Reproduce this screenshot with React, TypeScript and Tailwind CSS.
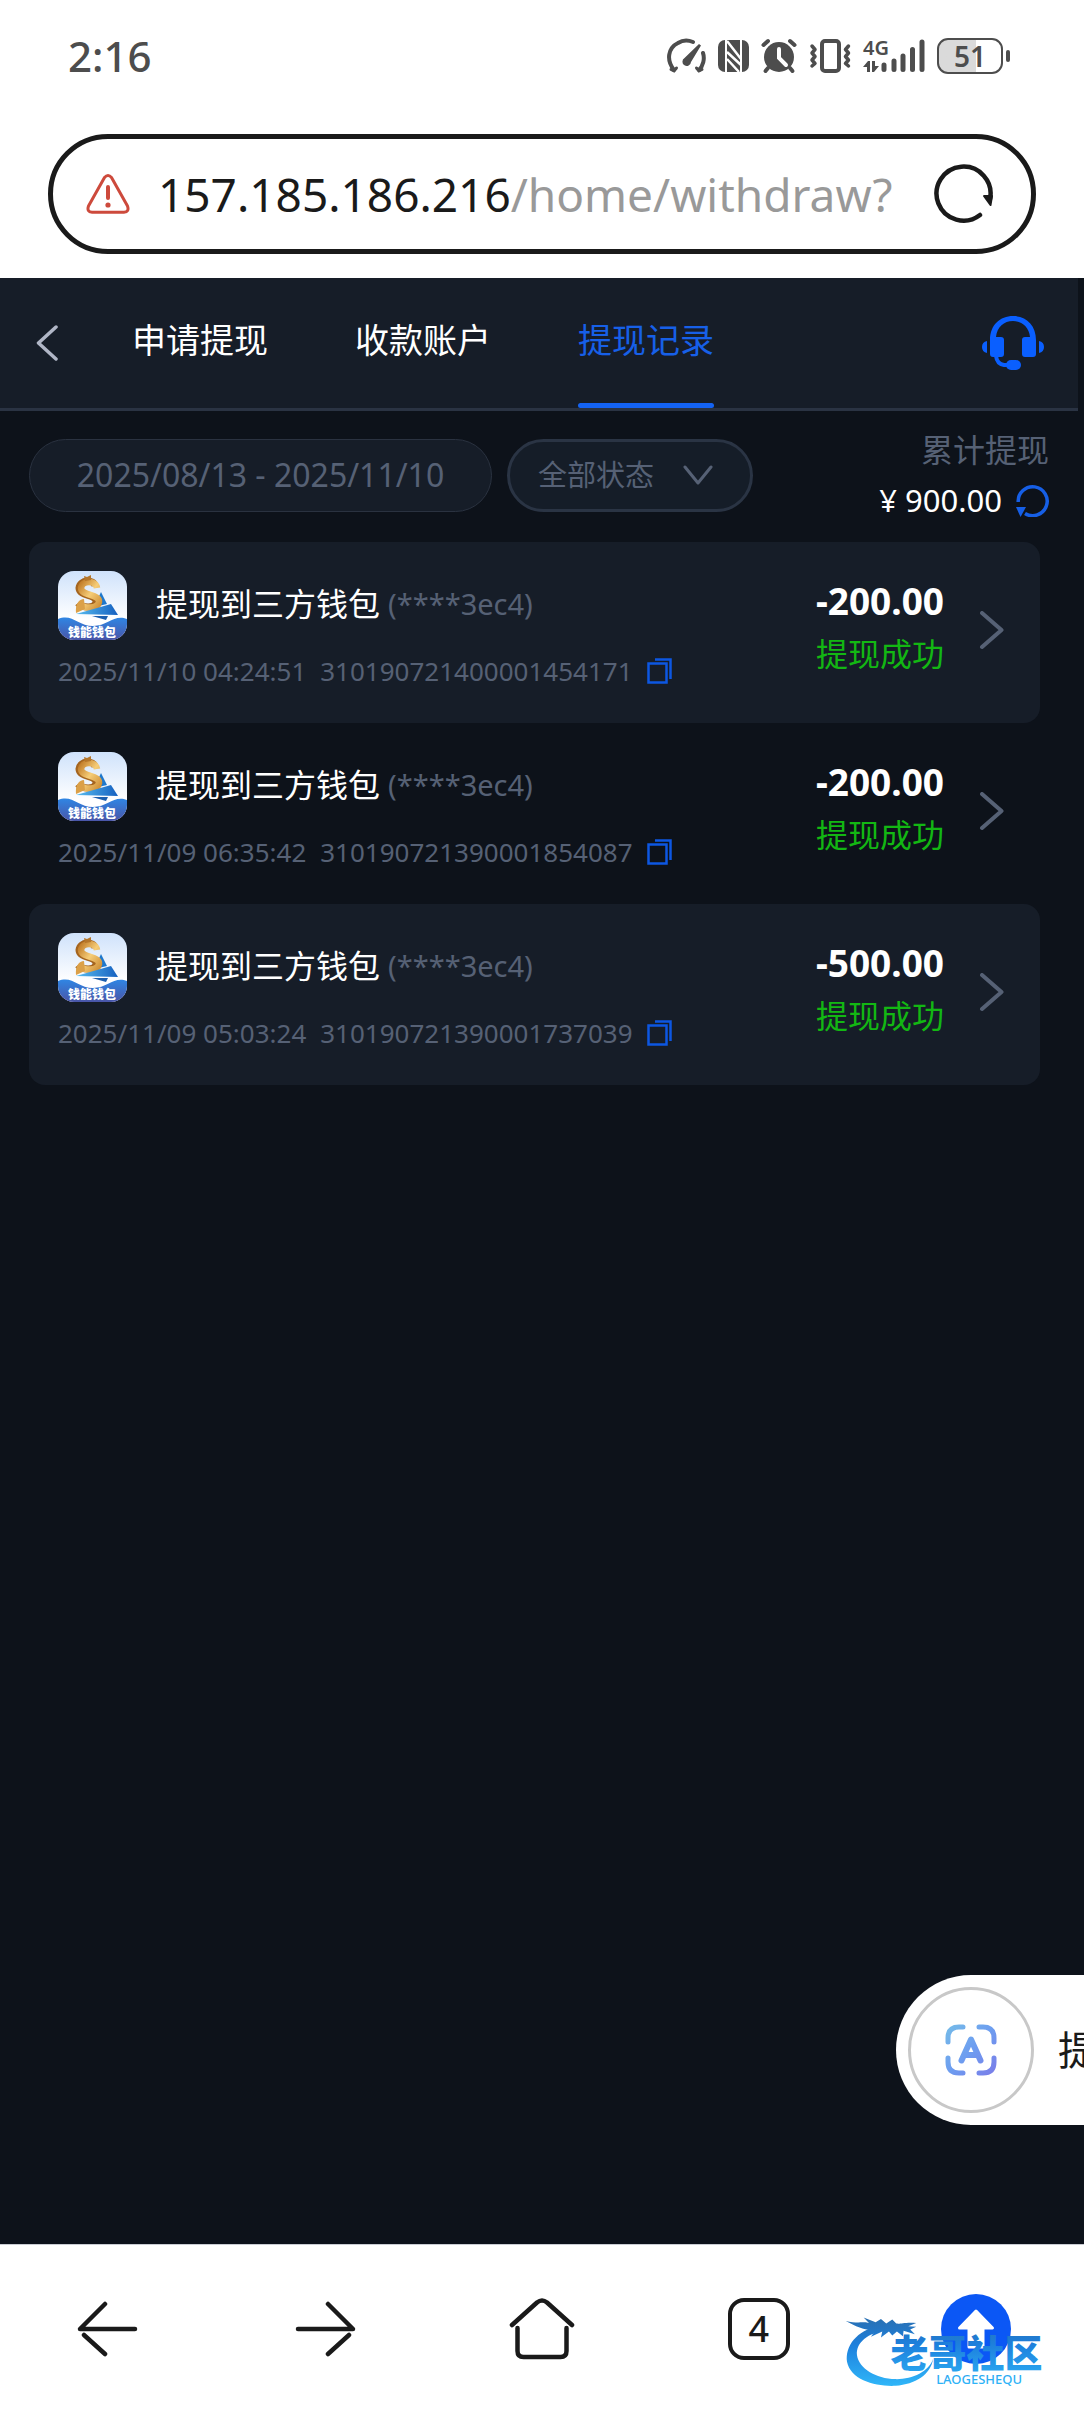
import { useState } from "react"

const RECORDS = [
  { id: "310190721400001454171", time: "2025/11/10 04:24:51", amount: "-200.00" },
  { id: "310190721390001854087", time: "2025/11/09 06:35:42", amount: "-200.00" },
  { id: "310190721390001737039", time: "2025/11/09 05:03:24", amount: "-500.00" },
]

const TABS = ["申请提现", "收款账户", "提现记录"]

function StatusBar() {
  return (
    <div className="flex h-28 items-center justify-between pr-[74px] pl-[68px] text-[#4d4d4d]">
      <span className="text-[42px] leading-none font-medium">2:16</span>
      <div className="flex items-center gap-3">
        {/* Speed */}
        <svg width="39" height="36" viewBox="0 0 39 36" fill="none" stroke="currentColor" strokeWidth="4" strokeLinecap="round">
          <path d="M7 32 C-1 22 1 10 11 5 C15 2.500 21 2 26 4" />
          <path d="M36 15 C38 21 36 28 32 32" />
          <path d="M4 31.500 L7 33 L9.500 30 M35 31.500 L32 33 L29.500 30" strokeWidth="3" />
          <path d="M32 6 L34 7.500 L24 24 A4.300 4.300 0 1 1 17.500 20 Z" fill="currentColor" stroke="none" />
        </svg>
        {/* NFC */}
        <svg width="31" height="36" viewBox="0 0 31 36">
          <rect x="0" y="2" width="31" height="32" rx="7" fill="currentColor" />
          <path d="M8 2 L8 34 M23 2 L23 34" stroke="#fff" strokeWidth="2" />
          <path d="M9 3 L23 21 M9 14 L23 27 M9 21 L21 34" stroke="#fff" strokeWidth="2.500" />
        </svg>
        {/* Alarm */}
        <svg width="36" height="36" viewBox="0 0 36 36" fill="none" stroke="currentColor" strokeWidth="4" strokeLinecap="round">
          <circle cx="18" cy="19" r="15" fill="currentColor" stroke="none" />
          <path d="M2.500 7 L7 3 M33.500 7 L29 3" />
          <path d="M7 30 L4.500 33 M29 30 L31.500 33" />
          <path d="M18 11 L18 20 L25 27" stroke="#fff" />
        </svg>
        {/* Vibrate */}
        <svg width="42" height="36" viewBox="0 0 42 36" fill="none" stroke="currentColor" strokeWidth="4" strokeLinejoin="round" strokeLinecap="round">
          <rect x="13" y="3" width="17" height="30" rx="3" />
          <path d="M3 8 L6 11.500 L3 15 L6 18.500 L3 22 L6 25.500 L3 28" strokeWidth="3.500" />
          <path d="M39.500 8 L36.500 11.500 L39.500 15 L36.500 18.500 L39.500 22 L36.500 25.500 L39.500 28" strokeWidth="3.500" />
        </svg>
        {/* Signal */}
        <svg className="overflow-visible" width="62" height="36" viewBox="0 0 62 36" fill="currentColor">
          <text x="0" y="17" fontSize="20" fontWeight="600">4G</text>
          <path d="M0 29 L5 23 L7 23 L7 34 L4 34 L4 29 Z M9 23 L12 23 L12 28 L16 28 L11 34 L9 34 Z" />
          <g stroke="currentColor" strokeWidth="5" strokeLinecap="round">
            <path d="M21 27 V31.500 M31 23 V31.500 M40 18 V31.500 M49.500 11.500 V31.500 M59 4 V31.500" />
          </g>
        </svg>
        {/* Battery */}
        <div className="flex items-center gap-[3px]">
          <div className="flex h-9 w-[66px] items-center justify-center rounded-[11px] border-2 border-current bg-linear-to-r from-[#dadada] from-60% to-white to-60% text-[28px] leading-none font-semibold">
            51
          </div>
          <div className="h-3 w-1 rounded-full bg-current" />
        </div>
      </div>
    </div>
  )
}

function AddressBar() {
  return (
    <div className="px-12 pt-[22px] pb-6">
      <div className="flex h-[120px] items-center gap-7 rounded-full border-5 border-[#1a1a1a] pr-9 pl-[33px]">
        <svg className="shrink-0" width="44" height="40" viewBox="0 0 44 40" fill="none" stroke="#cd4a3c" strokeWidth="3" strokeLinejoin="round">
          <path d="M18.500 3.500 Q22 -0.500 25.500 3.500 L41.500 32 Q43.500 38 38 38.200 L6 38.200 Q0.500 38 2.500 32 Z" />
          <path d="M22 13 V24" strokeWidth="4" strokeLinecap="round" />
          <circle cx="22" cy="31" r="2.600" fill="#cd4a3c" stroke="none" />
        </svg>
        <button className="min-w-0 flex-1 overflow-hidden text-left text-[46px] leading-[64px] whitespace-nowrap text-[#1a1a1a]">
          157.185.186.216<span className="text-[#999]">/home/withdraw?</span>
        </button>
        <button aria-label="刷新" className="shrink-0">
          <svg width="64" height="64" viewBox="0 0 64 64" fill="none" stroke="#1a1a1a" strokeWidth="4.500" strokeLinecap="round">
            <path d="M49 53 A27 27 0 1 1 59 37" />
            <path d="M53 34 L61 34 L59.500 43 Z" fill="#1a1a1a" strokeWidth="2" strokeLinejoin="round" />
          </svg>
        </button>
      </div>
    </div>
  )
}

function NavBar({ active, onChange }: { active: string; onChange: (tab: string) => void }) {
  return (
    <nav className="mr-1.5 flex h-[133px] items-stretch border-b-3 border-[#2a3343] bg-[#161d28] pr-[34px] pl-9">
      <button aria-label="返回" className="mr-[74px]">
        <svg width="22" height="38" viewBox="0 0 22 38" fill="none" stroke="#b0b6c6" strokeWidth="3.500" strokeLinecap="round" strokeLinejoin="round">
          <path d="M20 3 L2.500 19 L20 35" />
        </svg>
      </button>
      <div className="flex flex-1 gap-[87px] text-[34px]">
        {TABS.map(tab => (
          <button
            key={tab}
            onClick={() => onChange(tab)}
            className={
              tab === active
                ? "flex flex-col items-center justify-between text-[#1760e8]"
                : "flex flex-col items-center justify-between text-white"
            }
          >
            <span className="flex flex-1 items-center">{tab}</span>
            <span className={tab === active ? "h-[5px] w-full rounded-full bg-[#1463f3]" : "h-[5px]"} />
          </button>
        ))}
      </div>
      <button aria-label="客服">
        <svg width="62" height="54" viewBox="0 0 62 54" fill="#0a5fff">
          <path d="M8 24 C8 9 18 0 31 0 C44 0 54 9 54 24 L54 38 Q54 41 51 41 L43 41 Q40 41 40 38 L40 24 Q40 21 43 21 L48 21 C47 11 40 5 31 5 C22 5 15 11 14 21 L19 21 Q22 21 22 24 L22 38 Q22 41 19 41 L11 41 Q8 41 8 38 Z" />
          <path d="M5 25 V37 Q0 36 0 31 Q0 26 5 25 Z M57 25 V37 Q62 36 62 31 Q62 26 57 25 Z" />
          <path d="M14 40 Q15 48 22 49 H27" fill="none" stroke="#0a5fff" strokeWidth="4" />
          <rect x="24" y="44" width="15" height="10" rx="5" />
        </svg>
      </button>
    </nav>
  )
}

function Filters() {
  return (
    <div className="mr-1.5 flex items-center justify-between px-[29px] pt-[14px]">
      <div className="flex gap-[15px]">
        <button className="h-[73px] w-[463px] rounded-full border border-[#2a3240] bg-[#161d28] text-[32px] text-[#566175]">
          2025/08/13 - 2025/11/10
        </button>
        <div className="relative">
          <select
            aria-label="状态"
            className="h-[73px] w-[246px] appearance-none rounded-full border-3 border-[#2a3444] bg-[#151d28] pl-7 text-[29px] text-[#566175] outline-none"
          >
            <option>全部状态</option>
          </select>
          <svg className="pointer-events-none absolute top-6 right-10" width="30" height="26" viewBox="0 0 30 26" fill="none" stroke="#566175" strokeWidth="3" strokeLinecap="round" strokeLinejoin="round">
            <path d="M2 4 L15 20 L28 4" />
          </svg>
        </div>
      </div>
      <div className="flex flex-col items-end leading-[50px]">
        <span className="text-[32px] text-[#566175]">累计提现</span>
        <div className="flex items-center text-[31px] text-white">
          <span className="mr-2">¥</span>
          <span className="mr-[14px]">900.00</span>
          <button aria-label="更新总额">
            <svg width="33" height="33" viewBox="0 0 33 33" fill="none" stroke="#165fe6" strokeWidth="3.500">
              <path d="M2.200 18 A14.500 14.500 0 1 1 9 29.500" />
              <path d="M0 23 H10 L4.500 33 Z" fill="#165fe6" stroke="none" />
            </svg>
          </button>
        </div>
      </div>
    </div>
  )
}

function WalletLogo() {
  return (
    <svg className="shrink-0 rounded-2xl" width="69" height="69" viewBox="0 0 69 69">
      <defs>
        <linearGradient id="sky" x1="0" y1="0" x2="0" y2="1">
          <stop offset="0" stopColor="#cfe2fb" />
          <stop offset="0.700" stopColor="#ffffff" />
        </linearGradient>
        <linearGradient id="gold" x1="0" y1="0" x2="1" y2="1">
          <stop offset="0" stopColor="#c07a26" />
          <stop offset="0.500" stopColor="#f6cd78" />
          <stop offset="1" stopColor="#cf9038" />
        </linearGradient>
        <linearGradient id="plane" x1="0" y1="0" x2="1" y2="0">
          <stop offset="0" stopColor="#58bdf0" />
          <stop offset="1" stopColor="#1560c0" />
        </linearGradient>
        <linearGradient id="wave" x1="0" y1="0" x2="0" y2="1">
          <stop offset="0" stopColor="#2f86e4" />
          <stop offset="1" stopColor="#4a55a8" />
        </linearGradient>
      </defs>
      <rect width="69" height="69" fill="url(#sky)" />
      <path d="M43 21 L49 33 L36 36 Z" fill="#1f78cc" />
      <path d="M37 15 C36 8 22 8 21 17 C21 26 39 23 38 31 C37 38 24 37 20 32" fill="none" stroke="#a5651f" strokeWidth="7" />
      <path d="M39 17 C38 9 24 9 23 17 C23 25 42 23 41 31 C40 38 26 38 22 33" fill="none" stroke="url(#gold)" strokeWidth="6.500" />
      <path d="M26 5 L29 6 L33 4 L33 9 L27 10 Z" fill="#b5762a" />
      <path d="M18 42 C17 33 21 28 26 28 L27 38 Z" fill="#dba048" />
      <path d="M18 43 L53 33 L60 44 Z" fill="url(#plane)" />
      <path d="M34 45 L50 45 L48 49 Z" fill="#1c5fae" />
      <path d="M0 48 C14 42 20 55 35 55 C50 55 56 43 69 48 V69 H0 Z" fill="url(#wave)" />
      <text x="10" y="66" fontSize="12" fontWeight="900" fill="#fff">钱能钱包</text>
    </svg>
  )
}

function RecordRow({ record }: { record: (typeof RECORDS)[number] }) {
  return (
    <li className="flex items-start rounded-2xl pt-[29px] pr-9 pb-8 pl-[29px] odd:bg-[#161d28]">
      <div className="flex-1">
        <div className="flex items-start">
          <WalletLogo />
          <span className="ml-[29px] text-[32px] leading-[66px] text-white">提现到三方钱包</span>
          <span className="ml-2 text-[29px] leading-[66px] text-[#566175]">(****3ec4)</span>
        </div>
        <div className="mt-[11px] flex items-center text-[26px] leading-10 text-[#566175]">
          <time>{record.time}</time>
          <span className="ml-[14px]">{record.id}</span>
          <button aria-label="复制" className="ml-[14px]">
            <svg width="25" height="26" viewBox="0 0 25 26" fill="none" stroke="#0d57e2" strokeWidth="2.500">
              <rect x="1.500" y="5.500" width="18" height="19" />
              <path d="M8 1.500 H23.500 V21" />
            </svg>
          </button>
        </div>
      </div>
      <div className="flex flex-col items-end pt-[3px] leading-[53px]">
        <span className="text-[37px] font-bold text-white">{record.amount}</span>
        <span className="text-[32px] text-[#13b713]">提现成功</span>
      </div>
      <button aria-label="查看详情" className="ml-[35px] self-center">
        <svg width="25" height="40" viewBox="0 0 25 40" fill="none" stroke="#566175" strokeWidth="4" strokeLinecap="round" strokeLinejoin="round">
          <path d="M3 2 L22.500 19 L3 36" />
        </svg>
      </button>
    </li>
  )
}

function ExtractBubble() {
  return (
    <button className="absolute right-0 bottom-[119px] flex h-[150px] w-[188px] items-center overflow-hidden rounded-l-full bg-white pl-3 text-[40px] whitespace-nowrap text-[#1a1a1a]">
      <span className="flex size-[126px] shrink-0 items-center justify-center rounded-full border-3 border-[#c8c8c8]">
        <svg width="52" height="52" viewBox="0 0 52 52" fill="none" stroke="url(#scan)" strokeWidth="5" strokeLinecap="round" strokeLinejoin="round">
          <defs>
            <linearGradient id="scan" gradientUnits="userSpaceOnUse" x1="0" y1="0" x2="52" y2="52">
              <stop offset="0" stopColor="#76bde8" />
              <stop offset="0.500" stopColor="#6d9df0" />
              <stop offset="1" stopColor="#7b7be8" />
            </linearGradient>
          </defs>
          <path d="M3 18 V14 Q3 3 14 3 H18 M34 3 H38 Q49 3 49 14 V18 M49 34 V38 Q49 49 38 49 H34 M18 49 H14 Q3 49 3 38 V34" />
          <path d="M16.500 36.500 L26 15.500 L35.500 36.500 M20 31 H32" strokeWidth="6" />
        </svg>
      </span>
      <span className="ml-6">提</span>
    </button>
  )
}

function CommunityMark() {
  return (
    <svg className="pointer-events-none absolute right-4 bottom-[25px] overflow-visible" width="223" height="72" viewBox="438 255 670 215">
      <defs>
        <linearGradient id="mark" gradientUnits="userSpaceOnUse" x1="0" y1="260" x2="0" y2="465">
          <stop offset="0" stopColor="#2a6fb0" />
          <stop offset="0.400" stopColor="#1d7fdc" />
          <stop offset="1" stopColor="#2fb5f8" />
        </linearGradient>
      </defs>
      <g fill="url(#mark)">
        <path d="M545 285 C470 300 438 350 444 395 C455 450 530 470 590 467 C650 462 695 435 703 385 C690 425 640 448 590 447 C530 445 480 415 474 375 C470 335 510 308 560 300 Z" />
        <path d="M440 272 C470 280 490 274 510 278 L494 262 L530 276 L546 266 L562 280 L580 268 L592 280 C606 282 612 276 652 278 L628 288 L652 290 L634 298 L648 312 L614 302 L612 318 L594 304 L580 316 L570 304 L546 322 L550 304 L516 320 L530 300 C500 302 470 288 440 272 Z" />
        <text x="575" y="410" fontSize="114" fontWeight="900">老哥社区</text>
        <text x="712" y="462" fontSize="39" fontWeight="500">LAOGESHEQU</text>
      </g>
    </svg>
  )
}

function BottomBar() {
  return (
    <footer className="relative grid h-42 grid-cols-5 items-center justify-items-center border-t border-[#c9ccd3] bg-white text-[#1a1a1a]">
      <button aria-label="后退">
        <svg width="62" height="56" viewBox="0 0 62 56" fill="none" stroke="currentColor" strokeWidth="4.500" strokeLinecap="round" strokeLinejoin="round">
          <path d="M58 28 H3 L28 3" />
          <path d="M7 34 L28 53" />
        </svg>
      </button>
      <button aria-label="前进">
        <svg width="62" height="56" viewBox="0 0 62 56" fill="none" stroke="currentColor" strokeWidth="4.500" strokeLinecap="round" strokeLinejoin="round">
          <path d="M4 28 H59 L34 3" />
          <path d="M55 34 L34 53" />
        </svg>
      </button>
      <button aria-label="主页">
        <svg width="66" height="62" viewBox="0 0 66 62" fill="none" stroke="currentColor" strokeWidth="4.500" strokeLinecap="round" strokeLinejoin="round">
          <path d="M3 27 L28 4.500 Q33 0.500 38 4.500 L63 27" />
          <path d="M8.500 30 V53 Q8.500 59 14.500 59 H51.500 Q57.500 59 57.500 53 V30" />
        </svg>
      </button>
      <button aria-label="标签页" className="flex size-[62px] items-center justify-center rounded-2xl border-4 border-current text-[36px] leading-none font-medium">
        4
      </button>
      <button aria-label="上传" className="flex size-[70px] items-center justify-center rounded-full bg-[#0b57f5]">
        <svg width="38" height="42" viewBox="0 0 38 42" fill="#fff" stroke="#fff" strokeWidth="3" strokeLinejoin="round">
          <path d="M19 3 L35.500 20 H26 V39 H12 V20 H2.500 Z" />
        </svg>
      </button>
      <CommunityMark />
    </footer>
  )
}

export default function App() {
  const [tab, setTab] = useState("提现记录")

  return (
    <div className="flex min-h-screen flex-col bg-white [font-family:'Noto_Sans','Noto_Sans_CJK_SC',sans-serif]">
      <header>
        <StatusBar />
        <AddressBar />
      </header>
      <main className="relative flex-1 bg-[#0d121a]">
        <NavBar active={tab} onChange={setTab} />
        <Filters />
        <ul className="mt-[17px] mr-11 ml-[29px]">
          {RECORDS.map(record => (
            <RecordRow key={record.id} record={record} />
          ))}
        </ul>
        <ExtractBubble />
      </main>
      <BottomBar />
    </div>
  )
}
